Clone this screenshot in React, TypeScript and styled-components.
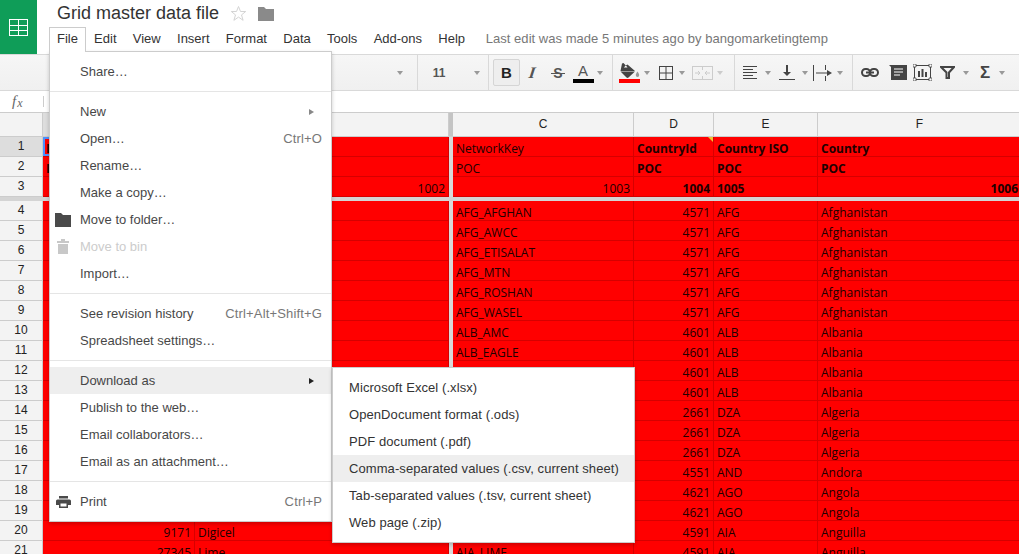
import React from 'react';
import styled, { createGlobalStyle } from 'styled-components';

const GlobalStyle = createGlobalStyle`
  html, body { margin: 0; padding: 0; background: #fff; }
  body { font-family: "Liberation Sans", Arial, sans-serif; }
`;

type RowData = {
  n: number;
  a?: string;
  b?: string;
  c?: string;
  d?: string;
  e?: string;
  f?: string;
};

const bodyRows: RowData[] = [
  { n: 4, c: 'AFG_AFGHAN', d: '4571', e: 'AFG', f: 'Afghanistan' },
  { n: 5, c: 'AFG_AWCC', d: '4571', e: 'AFG', f: 'Afghanistan' },
  { n: 6, c: 'AFG_ETISALAT', d: '4571', e: 'AFG', f: 'Afghanistan' },
  { n: 7, c: 'AFG_MTN', d: '4571', e: 'AFG', f: 'Afghanistan' },
  { n: 8, c: 'AFG_ROSHAN', d: '4571', e: 'AFG', f: 'Afghanistan' },
  { n: 9, c: 'AFG_WASEL', d: '4571', e: 'AFG', f: 'Afghanistan' },
  { n: 10, c: 'ALB_AMC', d: '4601', e: 'ALB', f: 'Albania' },
  { n: 11, c: 'ALB_EAGLE', d: '4601', e: 'ALB', f: 'Albania' },
  { n: 12, d: '4601', e: 'ALB', f: 'Albania' },
  { n: 13, d: '4601', e: 'ALB', f: 'Albania' },
  { n: 14, d: '2661', e: 'DZA', f: 'Algeria' },
  { n: 15, d: '2661', e: 'DZA', f: 'Algeria' },
  { n: 16, d: '2661', e: 'DZA', f: 'Algeria' },
  { n: 17, d: '4551', e: 'AND', f: 'Andora' },
  { n: 18, d: '4621', e: 'AGO', f: 'Angola' },
  { n: 19, d: '4621', e: 'AGO', f: 'Angola' },
  { n: 20, a: '9171', b: 'Digicel', d: '4591', e: 'AIA', f: 'Anguilla' },
  { n: 21, a: '27345', b: 'Lime', c: 'AIA_LIME', d: '4591', e: 'AIA', f: 'Anguilla' },
];

const menuNames = ['Edit', 'View', 'Insert', 'Format', 'Data', 'Tools', 'Add-ons', 'Help'];

const downloadFormats = [
  'Microsoft Excel (.xlsx)',
  'OpenDocument format (.ods)',
  'PDF document (.pdf)',
  'Comma-separated values (.csv, current sheet)',
  'Tab-separated values (.tsv, current sheet)',
  'Web page (.zip)',
];

const BodyRow = ({ row }: { row: RowData }) => (
  <GridRow>
    <RowHead>{row.n}</RowHead>
    <Cell $right>{row.a}</Cell>
    <Cell>{row.b}</Cell>
    <FreezeCol />
    <Cell>{row.c}</Cell>
    <Cell $right>{row.d}</Cell>
    <Cell>{row.e}</Cell>
    <Cell>{row.f}</Cell>
  </GridRow>
);

const App = () => (
  <Page>
    <GlobalStyle />
    <Header>
      <Logo>
        <svg width="19" height="17" viewBox="0 0 19 17" fill="none" stroke="#fff" strokeWidth="1">
          <rect x="0.5" y="0.5" width="18" height="16" />
          <path d="M0.5 6.5H18.5M0.5 11.5H18.5M9.5 0.5V16.5" />
        </svg>
      </Logo>
      <HeaderMain>
        <TitleRow>
          <Title>Grid master data file</Title>
          <StarIcon width="17" height="17" viewBox="0 0 17 17">
            <path d="M8.5 1.5l2 5h5.2l-4.2 3.4 1.6 5.4-4.6-3.2-4.6 3.2 1.6-5.4L1.300 6.500h5.200z" fill="none" stroke="#d4d4d4" />
          </StarIcon>
          <FolderIcon width="16" height="14" viewBox="0 0 16 14">
            <path d="M0 0h6l2 2h8v12H0z" fill="#8a8a8a" />
          </FolderIcon>
        </TitleRow>
        <MenuBar>
          <MenuEntry>
            <FileTab>File</FileTab>
            <FileMenu>
              <MenuRow><IconSlot /><MenuLabel>Share…</MenuLabel></MenuRow>
              <MenuDivider />
              <MenuRow><IconSlot /><MenuLabel>New</MenuLabel><Arrow /></MenuRow>
              <MenuRow><IconSlot /><MenuLabel>Open…</MenuLabel><Shortcut>Ctrl+O</Shortcut></MenuRow>
              <MenuRow><IconSlot /><MenuLabel>Rename…</MenuLabel></MenuRow>
              <MenuRow><IconSlot /><MenuLabel>Make a copy…</MenuLabel></MenuRow>
              <MenuRow>
                <IconSlot>
                  <svg width="16" height="14" viewBox="0 0 16 14"><path d="M0 0h6l2 2h8v12H0z" fill="#4a4a4a" /></svg>
                </IconSlot>
                <MenuLabel>Move to folder…</MenuLabel>
              </MenuRow>
              <MenuRow>
                <IconSlot>
                  <svg width="12" height="15" viewBox="0 0 12 15"><path d="M0 2h4V0h4v2h4v2H0zM1 5h10v10H1z" fill="#c8c8c8" /></svg>
                </IconSlot>
                <MenuLabel $disabled>Move to bin</MenuLabel>
              </MenuRow>
              <MenuRow><IconSlot /><MenuLabel>Import…</MenuLabel></MenuRow>
              <MenuDivider />
              <MenuRow><IconSlot /><MenuLabel>See revision history</MenuLabel><Shortcut>Ctrl+Alt+Shift+G</Shortcut></MenuRow>
              <MenuRow><IconSlot /><MenuLabel>Spreadsheet settings…</MenuLabel></MenuRow>
              <MenuDivider />
              <MenuRow $active>
                <IconSlot />
                <MenuLabel>Download as</MenuLabel>
                <Arrow $dark />
                <SubMenu>
                  {downloadFormats.map((name, i) => (
                    <SubRow key={name} $active={i === 3}>{name}</SubRow>
                  ))}
                </SubMenu>
              </MenuRow>
              <MenuRow><IconSlot /><MenuLabel>Publish to the web…</MenuLabel></MenuRow>
              <MenuRow><IconSlot /><MenuLabel>Email collaborators…</MenuLabel></MenuRow>
              <MenuRow><IconSlot /><MenuLabel>Email as an attachment…</MenuLabel></MenuRow>
              <MenuDivider />
              <MenuRow>
                <IconSlot>
                  <svg width="15" height="12" viewBox="0 0 15 12"><path d="M3 0h9v2.500H3zM1.500 3.500h12q1.500 0 1.500 1.500v4h-3v3H3V9H0V5q0-1.500 1.500-1.500zM4.500 7.500v3h6v-3z" fill="#4a4a4a" fillRule="evenodd" /></svg>
                </IconSlot>
                <MenuLabel>Print</MenuLabel>
                <Shortcut>Ctrl+P</Shortcut>
              </MenuRow>
            </FileMenu>
          </MenuEntry>
          {menuNames.map((name) => (
            <MenuItem key={name}>{name}</MenuItem>
          ))}
          <LastEdit>Last edit was made 5 minutes ago by bangomarketingtemp</LastEdit>
        </MenuBar>
      </HeaderMain>
    </Header>

    <Toolbar>
      <Slot $w={393} />
      <Slot $w={14}><Caret /></Slot>
      <Slot $w={10} />
      <ToolDivider />
      <FontSize>11</FontSize>
      <Slot $w={10} />
      <Slot $w={14}><Caret /></Slot>
      <Slot $w={4} />
      <ToolDivider />
      <Slot $w={4} />
      <BoldButton>B</BoldButton>
      <Slot $w={25}><ItalicGlyph>I</ItalicGlyph></Slot>
      <Slot $w={26}><StrikeGlyph>S</StrikeGlyph></Slot>
      <Slot $w={24}>
        <ColorStack>
          <ColorGlyph>A</ColorGlyph>
          <ColorBar $color="#000" />
        </ColorStack>
      </Slot>
      <Slot $w={10}><Caret /></Slot>
      <Slot $w={7} />
      <ToolDivider />
      <Slot $w={3} />
      <Slot $w={27}>
        <ColorStack>
          <svg width="21" height="15" viewBox="0 0 21 15" fill="#444">
            <path d="M3 0.500L4.500 0l2.300 2.600L8.500 1.500l7.500 6.500H1.500z" />
            <path d="M1.500 8.500h14.500L9.500 14.500q-1 .8-2 0z" />
            <path d="M4.800 4.500L6.800 2.600 8.500 4.500z" fill="#fff" />
            <path d="M18.500 8.500c1 1.500 1.700 2.500 1.700 3.700a1.700 1.700 0 0 1-3.400 0c0-1.200.7-2.200 1.700-3.700z" fill="#999" />
          </svg>
          <ColorBar $color="#f00" />
        </ColorStack>
      </Slot>
      <Slot $w={8}><Caret /></Slot>
      <Slot $w={3} />
      <Slot $w={24}>
        <svg width="14" height="14" viewBox="0 0 14 14" fill="none" stroke="#444">
          <rect x="0.500" y="0.500" width="13" height="13" />
          <path d="M7 0v14M0 7h14" />
        </svg>
      </Slot>
      <Slot $w={8}><Caret /></Slot>
      <Slot $w={2} />
      <Slot $w={28}>
        <svg width="21" height="14" viewBox="0 0 21 14" fill="none" stroke="#ccc">
          <rect x="0.500" y="0.500" width="20" height="13" />
          <path d="M10.500 0v4M10.500 10v4M3 7h5M6 5l2 2-2 2M18 7h-5M15 5l-2 2 2 2" />
        </svg>
      </Slot>
      <Slot $w={8}><Caret $light /></Slot>
      <Slot $w={10} />
      <ToolDivider />
      <Slot $w={1} />
      <Slot $w={28}>
        <svg width="14" height="13" viewBox="0 0 14 13" stroke="#444">
          <path d="M0 .5h14M0 3.500h10M0 6.500h14M0 9.500h10M0 12.500h14" />
        </svg>
      </Slot>
      <Slot $w={8}><Caret /></Slot>
      <Slot $w={29}>
        <svg width="16" height="15" viewBox="0 0 16 15" fill="#444">
          <path d="M7 0h2v7h3l-4 4-4-4h3zM0 14h16v1H0z" />
        </svg>
      </Slot>
      <Slot $w={8}><Caret /></Slot>
      <Slot $w={27}>
        <svg width="19" height="16" viewBox="0 0 19 16" fill="#444">
          <path d="M0 0h1v16H0zM12 0h1v5h-1zM12 11h1v5h-1zM3 7.500h11V5l5 3-5 3V8.500H3z" />
        </svg>
      </Slot>
      <Slot $w={8}><Caret /></Slot>
      <Slot $w={8} />
      <ToolDivider />
      <Slot $w={34}>
        <svg width="18" height="9" viewBox="0 0 18 9" fill="none" stroke="#444" strokeWidth="2">
          <rect x="1" y="1" width="8" height="7" rx="3.500" />
          <rect x="9" y="1" width="8" height="7" rx="3.500" />
          <path d="M5 4.500h8" />
        </svg>
      </Slot>
      <Slot $w={21}>
        <svg width="18" height="15" viewBox="0 0 18 15">
          <path d="M0 0h18v15H2V2z" fill="#444" />
          <path d="M5 4h9M5 7h9M5 10h6" stroke="#fff" />
        </svg>
      </Slot>
      <Slot $w={29}>
        <svg width="19" height="17" viewBox="0 0 19 17">
          <rect x="1.500" y="1.500" width="16" height="14" fill="none" stroke="#444" />
          <path d="M5 7h2v6H5zM8.500 5h2v8h-2zM12 8h2v5h-2z" fill="#444" />
          <path d="M0 0h3v3H0zM16 0h3v3h-3zM0 14h3v3H0zM16 14h3v3h-3z" fill="#fff" stroke="#444" strokeWidth="0.800" />
        </svg>
      </Slot>
      <Slot $w={20}>
        <svg width="15" height="13" viewBox="0 0 15 13" fill="none" stroke="#444" strokeWidth="2">
          <path d="M1 1h13L9 6.500V12H6.500V6.500z" />
        </svg>
      </Slot>
      <Slot $w={18}><Caret /></Slot>
      <Slot $w={20}><SigmaGlyph>Σ</SigmaGlyph></Slot>
      <Slot $w={14}><Caret /></Slot>
    </Toolbar>

    <FormulaBar>
      <FxLabel>f<FxSub>x</FxSub></FxLabel>
      <FxDivider />
    </FormulaBar>

    <ColumnHeader>
      <ColHead />
      <ColHead $selected>A</ColHead>
      <ColHead>B</ColHead>
      <FreezeHead />
      <ColHead>C</ColHead>
      <ColHead>D</ColHead>
      <ColHead>E</ColHead>
      <ColHead>F</ColHead>
    </ColumnHeader>

    <GridRow>
      <RowHead $selected>1</RowHead>
      <Cell $selected $bold>Id</Cell>
      <Cell />
      <FreezeCol />
      <Cell>NetworkKey</Cell>
      <Cell $bold>CountryId<NoteMark /></Cell>
      <Cell $bold>Country ISO</Cell>
      <Cell $bold>Country</Cell>
    </GridRow>
    <GridRow>
      <RowHead>2</RowHead>
      <Cell $bold>POC</Cell>
      <Cell />
      <FreezeCol />
      <Cell>POC</Cell>
      <Cell $bold>POC</Cell>
      <Cell $bold>POC</Cell>
      <Cell $bold>POC</Cell>
    </GridRow>
    <GridRow>
      <RowHead>3</RowHead>
      <Cell />
      <Cell $right>1002</Cell>
      <FreezeCol />
      <Cell $right>1003</Cell>
      <Cell $right $bold>1004</Cell>
      <Cell $bold>1005</Cell>
      <Cell $right $bold>1006</Cell>
    </GridRow>
    <FreezeRow />
    {bodyRows.map((row) => (
      <BodyRow key={row.n} row={row} />
    ))}
  </Page>
);

export default App;

const Page = styled.div`
  position: relative;
  width: 1019px;
  height: 554px;
  overflow: hidden;
  background: #fff;
`;

const Header = styled.header`
  position: relative;
  z-index: 10;
  display: flex;
  height: 54px;
  background: #fff;
`;

const Logo = styled.div`
  width: 37px;
  height: 54px;
  background: #0f9d58;
  display: flex;
  align-items: center;
  justify-content: center;
  flex-shrink: 0;
`;

const HeaderMain = styled.div`
  flex: 1;
  display: flex;
  flex-direction: column;
  padding-left: 12px;
`;

const TitleRow = styled.div`
  display: flex;
  align-items: center;
  height: 27px;
  padding-left: 8px;
`;

const Title = styled.div`
  font-size: 18px;
  color: #333;
`;

const StarIcon = styled.svg`
  margin-left: 11px;
`;

const FolderIcon = styled.svg`
  margin-left: 11px;
`;

const MenuBar = styled.nav`
  display: flex;
  align-items: flex-start;
  font-size: 13px;
  color: #333;
`;

const MenuEntry = styled.div`
  position: relative;
`;

const MenuItem = styled.div`
  height: 24px;
  line-height: 24px;
  padding: 0 8.15px;
`;

const FileTab = styled(MenuItem)`
  position: relative;
  z-index: 2;
  height: 24px;
  line-height: 22px;
  padding: 0 7px;
  background: #fff;
  border: 1px solid #ccc;
  border-bottom: none;
`;

const LastEdit = styled.div`
  height: 24px;
  line-height: 24px;
  margin-left: 12.500px;
  letter-spacing: 0.035px;
  color: #777;
`;

const FileMenu = styled.div`
  position: absolute;
  z-index: 1;
  top: 24px;
  left: 0;
  width: 281px;
  padding: 6px 0;
  background: #fff;
  border: 1px solid #ccc;
  box-shadow: 0 2px 4px rgba(0, 0, 0, 0.2);
`;

const MenuRow = styled.div<{ $active?: boolean }>`
  position: relative;
  display: flex;
  align-items: center;
  height: 27px;
  padding-right: 9px;
  background: ${({ $active }) => ($active ? '#eee' : 'transparent')};
`;

const IconSlot = styled.div`
  width: 30px;
  display: flex;
  align-items: center;
  justify-content: center;
  padding-right: 4px;
  box-sizing: border-box;
`;

const MenuLabel = styled.span<{ $disabled?: boolean }>`
  flex: 1;
  color: ${({ $disabled }) => ($disabled ? '#ccc' : '#333')};
  opacity: ${({ $disabled }) => ($disabled ? 1 : 0.9)};
`;

const Shortcut = styled.span`
  color: #777;
  letter-spacing: 0.15px;
`;

const Arrow = styled.span<{ $dark?: boolean }>`
  width: 0;
  height: 0;
  margin-right: 8px;
  border-top: 3.5px solid transparent;
  border-bottom: 3.5px solid transparent;
  border-left: 5px solid ${({ $dark }) => ($dark ? '#222' : '#888')};
`;

const MenuDivider = styled.div`
  height: 1px;
  margin: 6px 0;
  background: #e5e5e5;
`;

const SubMenu = styled.div`
  position: absolute;
  z-index: 3;
  top: 0;
  left: calc(100% + 1px);
  width: 301px;
  padding: 6px 0;
  background: #fff;
  border: 1px solid #ccc;
  box-shadow: 0 2px 4px rgba(0, 0, 0, 0.2);
`;

const SubRow = styled.div<{ $active?: boolean }>`
  height: 27px;
  line-height: 27px;
  padding-left: 16px;
  letter-spacing: 0.08px;
  color: #333;
  background: ${({ $active }) => ($active ? '#eee' : 'transparent')};
`;

const Toolbar = styled.div`
  display: flex;
  align-items: center;
  height: 37px;
  box-sizing: border-box;
  background: linear-gradient(#f6f6f6, #f0f0f0);
  border-top: 1px solid #d9d9d9;
  border-bottom: 1px solid #d9d9d9;
`;

const Slot = styled.div<{ $w: number }>`
  flex: 0 0 ${({ $w }) => $w}px;
  display: flex;
  align-items: center;
  justify-content: center;
`;

const Caret = styled.span<{ $light?: boolean }>`
  width: 0;
  height: 0;
  border-left: 3.5px solid transparent;
  border-right: 3.5px solid transparent;
  border-top: 4px solid ${({ $light }) => ($light ? '#ccc' : '#999')};
`;

const ToolDivider = styled.div`
  flex: 0 0 1px;
  align-self: stretch;
  background: #d9d9d9;
`;

const FontSize = styled.div`
  flex: 0 0 42px;
  text-align: center;
  font-size: 12px;
  font-weight: bold;
  color: #555;
`;

const BoldButton = styled.div`
  flex: 0 0 27px;
  height: 27px;
  box-sizing: border-box;
  display: flex;
  align-items: center;
  justify-content: center;
  border: 1px solid #d5d5d5;
  border-radius: 2px;
  background: #eee;
  font-family: "Liberation Sans", sans-serif;
  font-weight: bold;
  font-size: 15px;
  color: #222;
`;

const ItalicGlyph = styled.span`
  display: inline-block;
  transform: skewX(-18deg);
  font-family: "Liberation Serif", serif;
  font-weight: bold;
  font-size: 16px;
  color: #555;
`;

const StrikeGlyph = styled.span`
  position: relative;
  font-family: "Liberation Sans", sans-serif;
  font-size: 14px;
  font-weight: bold;
  color: #555;

  &::after {
    content: '';
    position: absolute;
    left: -2px;
    right: -2px;
    top: 8px;
    height: 1px;
    background: #555;
  }
`;

const ColorStack = styled.div`
  display: flex;
  flex-direction: column;
  align-items: center;
  gap: 1px;
  padding-top: 1px;
`;

const ColorGlyph = styled.span`
  font-size: 15px;
  line-height: 15px;
  color: #555;
`;

const ColorBar = styled.div<{ $color: string }>`
  width: 21px;
  height: 4px;
  background: ${({ $color }) => $color};
`;

const SigmaGlyph = styled.span`
  font-size: 17px;
  font-weight: bold;
  color: #444;
`;

const FormulaBar = styled.div`
  display: flex;
  align-items: center;
  height: 21px;
  background: #fff;
`;

const FxLabel = styled.span`
  width: 43px;
  padding-left: 12px;
  box-sizing: border-box;
  font-family: "Liberation Serif", serif;
  font-style: italic;
  font-size: 15px;
  color: #666;
`;

const FxSub = styled.span`
  font-size: 12px;
  vertical-align: -1px;
  margin-left: 1px;
`;

const FxDivider = styled.div`
  width: 1px;
  height: 11px;
  background: #ccc;
`;

const columns = '43px 152px 254px 4px 181px 80px 104px 204px';

const ColumnHeader = styled.div`
  display: grid;
  grid-template-columns: ${columns};
  height: 25px;
  box-sizing: border-box;
  border-top: 1px solid #ccc;
  border-bottom: 1px solid #ccc;
  background: #f3f3f3;
`;

const ColHead = styled.div<{ $selected?: boolean }>`
  box-sizing: border-box;
  border-right: 1px solid #ccc;
  background: ${({ $selected }) => ($selected ? '#ddd' : '#f3f3f3')};
  text-align: center;
  font-size: 12px;
  line-height: 23px;
  color: #222;
`;

const FreezeHead = styled.div`
  background: #c4c4c4;
`;

const GridRow = styled.div`
  display: grid;
  grid-template-columns: ${columns};
  height: 20px;
`;

const RowHead = styled.div<{ $selected?: boolean }>`
  box-sizing: border-box;
  border-right: 1px solid #ccc;
  border-bottom: 1px solid #ccc;
  background: ${({ $selected }) => ($selected ? '#ddd' : '#f3f3f3')};
  text-align: center;
  font-size: 12px;
  line-height: 19px;
  color: #222;
`;

const Cell = styled.div<{ $right?: boolean; $bold?: boolean; $selected?: boolean }>`
  position: relative;
  box-sizing: border-box;
  padding: 0 3px;
  overflow: hidden;
  white-space: nowrap;
  background: #f00;
  border-right: 1px solid #d60000;
  border-bottom: 1px solid #d60000;
  font-family: "Open Sans", sans-serif;
  font-size: 12px;
  line-height: 23px;
  color: #200000;
  text-align: ${({ $right }) => ($right ? 'right' : 'left')};
  font-weight: ${({ $bold }) => ($bold ? 700 : 400)};
  box-shadow: ${({ $selected }) => ($selected ? 'inset 0 0 0 2px #4d90fe' : 'none')};
`;

const NoteMark = styled.span`
  position: absolute;
  top: 0;
  right: 0;
  width: 0;
  height: 0;
  border-top: 5px solid #f1c232;
  border-left: 5px solid transparent;
`;

const FreezeCol = styled.div`
  background: #d9d9d9;
`;

const FreezeRow = styled.div`
  height: 4px;
  background: #d4d4d4;
`;
